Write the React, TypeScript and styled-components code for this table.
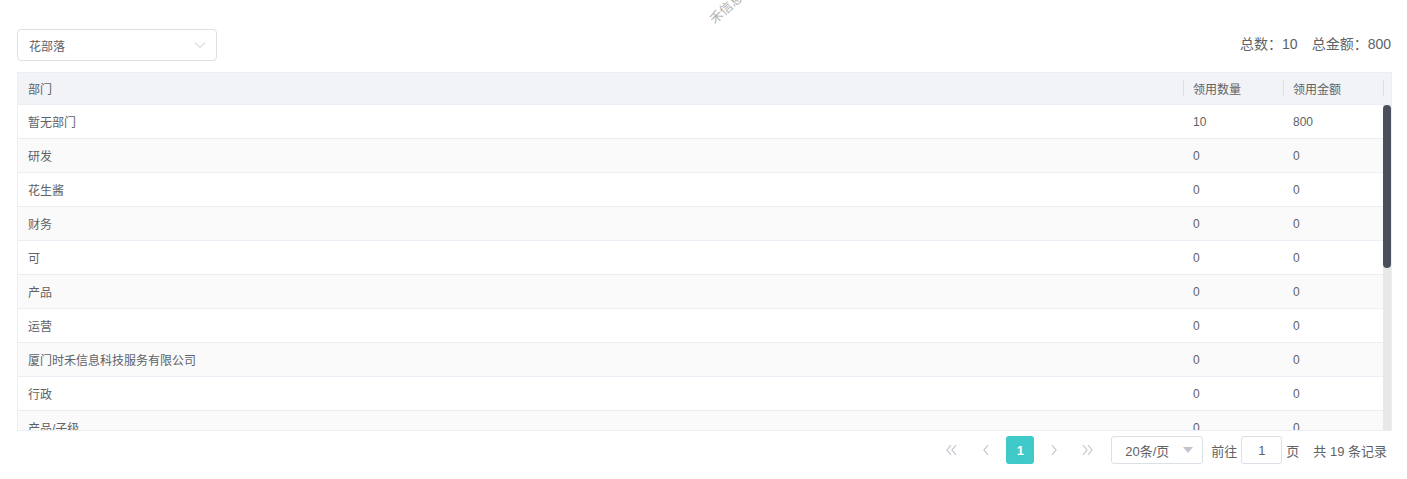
import React from "react";
import styled, { createGlobalStyle } from "styled-components";

const GlobalStyle = createGlobalStyle`
  html, body { margin: 0; padding: 0; background: #fff; }
  body { font-family: "Liberation Sans", "Noto Sans CJK SC", sans-serif; color: #606266; }
  * { box-sizing: border-box; }
`;

const Page = styled.div`
  position: relative;
  width: 1407px;
  height: 479px;
  overflow: hidden;
  padding: 29px 15px 0 17px;
`;

const Watermark = styled.div`
  position: absolute;
  left: 711px;
  top: 11px;
  font-size: 13px;
  color: #b0b0b0;
  white-space: nowrap;
  transform: rotate(-42deg);
  transform-origin: left center;
  pointer-events: none;
`;

const Toolbar = styled.div`
  display: flex;
  align-items: center;
  justify-content: space-between;
  height: 32px;
`;

const SelectBox = styled.div`
  width: 200px;
  height: 32px;
  border: 1px solid #dcdfe6;
  border-radius: 4px;
  display: flex;
  align-items: center;
  justify-content: space-between;
  padding: 0 10px 0 11px;
  font-size: 12px;
  color: #606266;
`;

const Totals = styled.div`
  font-size: 14px;
  color: #606266;
  display: flex;
  gap: 14px;
  margin-top: -4px;
  margin-right: 1px;
`;

const Table = styled.div`
  margin-top: 11px;
  border: 1px solid #ebeef5;
  width: 1375px;
`;

const HeaderRow = styled.div`
  display: grid;
  grid-template-columns: 1fr 100px 100px 8px;
  height: 32px;
  background: #f2f3f7;
  border-bottom: 1px solid #ebeef5;
`;

const HeadCell = styled.div<{ $divider?: boolean }>`
  position: relative;
  display: flex;
  align-items: center;
  padding: 0 10px;
  font-size: 12px;
  color: #606266;
  &::before {
    content: "";
    display: ${(p) => (p.$divider ? "block" : "none")};
    position: absolute;
    left: 0;
    top: 7px;
    height: 16px;
    width: 1px;
    background: #dcdfe6;
  }
`;

const BodyWrap = styled.div`
  display: flex;
  height: 325px;
`;

const BodyRows = styled.div`
  flex: 1;
  overflow: hidden;
`;

const ScrollTrack = styled.div`
  width: 8px;
  background: #e8e8e8;
  display: flex;
  flex-direction: column;
`;

const ScrollThumb = styled.div`
  height: 163px;
  background: #4a4f5c;
  border-radius: 4px;
`;

const Row = styled.div<{ $striped: boolean }>`
  display: grid;
  grid-template-columns: 1fr 100px 100px;
  height: 34px;
  background: ${(p) => (p.$striped ? "#fafafa" : "#fff")};
  border-bottom: 1px solid #ebeef5;
`;

const Cell = styled.div`
  display: flex;
  align-items: center;
  padding: 0 10px;
  font-size: 12px;
  color: #606266;
  white-space: nowrap;
`;

const Pager = styled.div`
  display: flex;
  justify-content: flex-end;
  align-items: center;
  height: 38px;
  padding-right: 5px;
  font-size: 13px;
  color: #606266;
`;

const PageBtn = styled.div<{ $active?: boolean }>`
  width: 28px;
  height: 28px;
  display: flex;
  align-items: center;
  justify-content: center;
  margin: 0 3px;
  border-radius: 3px;
  background: ${(p) => (p.$active ? "#40c9c9" : "transparent")};
  color: ${(p) => (p.$active ? "#fff" : "#c0c4cc")};
  font-weight: ${(p) => (p.$active ? 700 : 400)};
  font-size: 13px;
`;

const SizeSelect = styled.div`
  width: 92px;
  height: 28px;
  margin-left: 6px;
  border: 1px solid #dcdfe6;
  border-radius: 3px;
  display: flex;
  align-items: center;
  justify-content: space-between;
  padding: 0 9px 0 13px;
  font-size: 13px;
  color: #606266;
`;

const Caret = styled.span`
  width: 0;
  height: 0;
  border-left: 5px solid transparent;
  border-right: 5px solid transparent;
  border-top: 6px solid #c0c4cc;
`;

const Label = styled.span<{ $ml: number }>`
  margin-left: ${(p) => p.$ml}px;
  font-size: 13px;
  color: #606266;
  white-space: nowrap;
`;

const JumpInput = styled.div`
  width: 41px;
  height: 28px;
  margin-left: 4px;
  border: 1px solid #dcdfe6;
  border-radius: 3px;
  display: flex;
  align-items: center;
  justify-content: center;
  font-size: 13px;
  color: #606266;
`;

const Chevron = ({ dir, double }: { dir: "l" | "r"; double?: boolean }) => {
  const pts = (x: number) =>
    dir === "l" ? `${x + 4},2 ${x},7 ${x + 4},12` : `${x},2 ${x + 4},7 ${x},12`;
  return (
    <svg width={double ? 14 : 8} height="14" viewBox={double ? "0 0 14 14" : "0 0 8 14"} fill="none" stroke="#c0c4cc" strokeWidth="1.2">
      {double ? (
        <>
          <polyline points={pts(2)} />
          <polyline points={pts(7)} />
        </>
      ) : (
        <polyline points={pts(2)} />
      )}
    </svg>
  );
};

const rows: [string, string, string][] = [
  ["暂无部门", "10", "800"],
  ["研发", "0", "0"],
  ["花生酱", "0", "0"],
  ["财务", "0", "0"],
  ["可", "0", "0"],
  ["产品", "0", "0"],
  ["运营", "0", "0"],
  ["厦门时禾信息科技服务有限公司", "0", "0"],
  ["行政", "0", "0"],
  ["产品/子级", "0", "0"],
];

export default function App() {
  return (
    <Page>
      <GlobalStyle />
      <Watermark>禾信息科技</Watermark>
      <Toolbar>
        <SelectBox>
          <span>花部落</span>
          <svg width="12" height="8" viewBox="0 0 12 8" fill="none" stroke="#c0c4cc" strokeWidth="1">
            <polyline points="1,1.5 6,6.5 11,1.5" />
          </svg>
        </SelectBox>
        <Totals>
          <span>总数：10</span>
          <span>总金额：800</span>
        </Totals>
      </Toolbar>
      <Table>
        <HeaderRow>
          <HeadCell>部门</HeadCell>
          <HeadCell $divider>领用数量</HeadCell>
          <HeadCell $divider>领用金额</HeadCell>
          <HeadCell $divider />
        </HeaderRow>
        <BodyWrap>
          <BodyRows>
            {rows.map((r, i) => (
              <Row key={i} $striped={i % 2 === 1}>
                <Cell>{r[0]}</Cell>
                <Cell>{r[1]}</Cell>
                <Cell>{r[2]}</Cell>
              </Row>
            ))}
          </BodyRows>
          <ScrollTrack>
            <ScrollThumb />
          </ScrollTrack>
        </BodyWrap>
      </Table>
      <Pager>
        <PageBtn><Chevron dir="l" double /></PageBtn>
        <PageBtn><Chevron dir="l" /></PageBtn>
        <PageBtn $active>1</PageBtn>
        <PageBtn><Chevron dir="r" /></PageBtn>
        <PageBtn><Chevron dir="r" double /></PageBtn>
        <SizeSelect>
          <span>20条/页</span>
          <Caret />
        </SizeSelect>
        <Label $ml={8}>前往</Label>
        <JumpInput>1</JumpInput>
        <Label $ml={4}>页</Label>
        <Label $ml={14}>共 19 条记录</Label>
      </Pager>
    </Page>
  );
}
